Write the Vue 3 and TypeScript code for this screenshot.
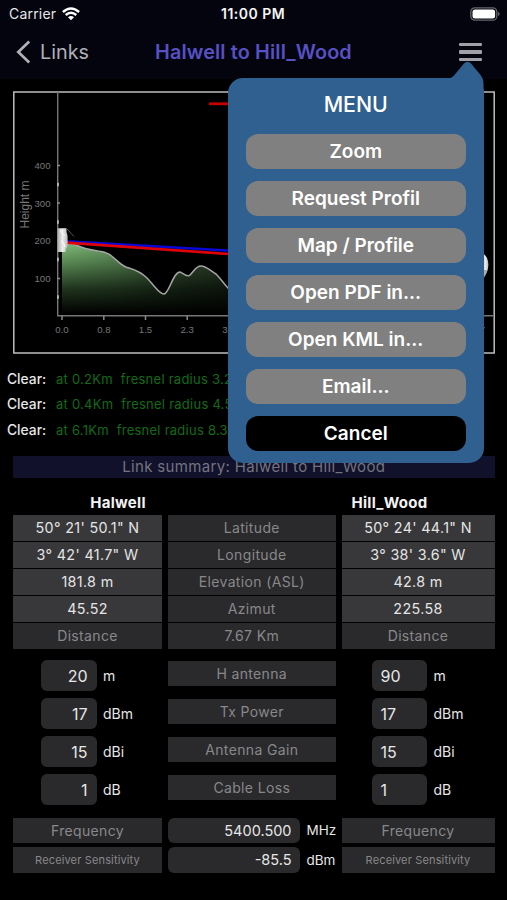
<script setup lang="ts">
interface ClearRow { at: string; radius: string }
interface SiteRow { left: string; label: string; right: string; dim?: boolean }
interface RadioRow { value: [string, string]; unit: string; label: string }

const actions: string[] = ['Zoom', 'Request Profil', 'Map / Profile', 'Open PDF in...', 'Open KML in...', 'Email...']

const clearances: ClearRow[] = [
  { at: 'at 0.2Km', radius: 'fresnel radius 3.2m' },
  { at: 'at 0.4Km', radius: 'fresnel radius 4.5m' },
  { at: 'at 6.1Km', radius: 'fresnel radius 8.3m' },
]

const siteRows: SiteRow[] = [
  { left: '50° 21\' 50.1" N', label: 'Latitude', right: '50° 24\' 44.1" N' },
  { left: '3° 42\' 41.7" W', label: 'Longitude', right: '3° 38\' 3.6" W' },
  { left: '181.8 m', label: 'Elevation (ASL)', right: '42.8 m' },
  { left: '45.52', label: 'Azimut', right: '225.58' },
  { left: 'Distance', label: '7.67 Km', right: 'Distance', dim: true },
]

const radioRows: RadioRow[] = [
  { value: ['20', '90'], unit: 'm', label: 'H antenna' },
  { value: ['17', '17'], unit: 'dBm', label: 'Tx Power' },
  { value: ['15', '15'], unit: 'dBi', label: 'Antenna Gain' },
  { value: ['1', '1'], unit: 'dB', label: 'Cable Loss' },
]

const yTicks = [
  { y: 165.5, text: '400' },
  { y: 203, text: '300' },
  { y: 240.5, text: '200' },
  { y: 278.5, text: '100' },
]
const minorTicks: number[] = [184.5, 222, 259.5, 297]
const xTicks = [
  { x: 62, text: '0.0' },
  { x: 103.8, text: '0.8' },
  { x: 145.5, text: '1.5' },
  { x: 187.2, text: '2.3' },
  { x: 229, text: '3.1' },
]
const terrain =
  'M62 247 C66 244 71 243 76 245 C84 249 91 250 98 251 C113 252 116 263 126 267 C132 269 139 270 147 278 C154 285 159 294 164 294 C169 294 173 272 180 272 C183 273 187 278 190 275 C194 271 196 266 201 266 C206 266 211 271 216 274 C221 279 224 284 228 288 C238 299 244 300 252 300'
</script>

<template>
  <div class="screen">
    <header class="top">
      <div class="status">
        <span class="carrier">Carrier</span>
        <svg class="wifi" viewBox="0 0 18 14" width="18" height="14">
          <path d="M0.9 5 Q9 -2 17.1 5" />
          <path d="M3.7 8 Q9 3.4 14.3 8" />
          <path class="dot" d="M9 13.2 L6 10.3 Q9 7.7 12 10.3 Z" />
        </svg>
        <span class="clock">11:00 PM</span>
        <svg class="battery" viewBox="0 0 31 14" width="31" height="14">
          <rect class="case" x="0.8" y="0.8" width="26" height="12.4" rx="4" />
          <rect class="charge" x="2.5" y="2.5" width="22.6" height="9" rx="2.5" />
          <path class="cap" d="M28.2 4.8 Q31 7 28.2 9.2 Z" />
        </svg>
      </div>
      <nav class="nav">
        <svg class="chevron" viewBox="0 0 15 24" width="15" height="24"><path d="M13.2 1.5 L2.3 12 L13.2 22.5" /></svg>
        <span class="back">Links</span>
        <h1>Halwell to Hill_Wood</h1>
        <span class="burger"><i></i><i></i><i></i></span>
      </nav>
    </header>

    <svg class="chart" viewBox="13 91 482 263" width="482" height="263">
      <defs>
        <linearGradient id="ground" gradientUnits="userSpaceOnUse" x1="0" y1="243" x2="0" y2="314">
          <stop offset="0" stop-color="#7fbd79" />
          <stop offset="0.25" stop-color="#5c8c57" />
          <stop offset="0.65" stop-color="#1f341d" />
          <stop offset="1" stop-color="#000" />
        </linearGradient>
        <linearGradient id="shade" gradientUnits="userSpaceOnUse" x1="62" y1="0" x2="240" y2="0">
          <stop offset="0" stop-color="#000" stop-opacity="0" />
          <stop offset="0.3" stop-color="#000" stop-opacity="0.15" />
          <stop offset="0.7" stop-color="#000" stop-opacity="0.5" />
          <stop offset="1" stop-color="#000" stop-opacity="0.65" />
        </linearGradient>
        <linearGradient id="dish" x1="0" y1="0" x2="1" y2="0">
          <stop offset="0" stop-color="#aaa" />
          <stop offset="0.5" stop-color="#eee" />
          <stop offset="1" stop-color="#bbb" />
        </linearGradient>
      </defs>
      <rect class="frame" x="13.8" y="92" width="480.4" height="261" />
      <path :d="terrain + ' V315 H62 Z'" fill="url(#ground)" />
      <path :d="terrain + ' V315 H62 Z'" fill="url(#shade)" />
      <path class="ridge" :d="terrain" />
      <path class="axis" d="M57.7 92 V315.7 M57 315.7 H493" />
      <g class="ticks">
        <g v-for="t in yTicks" :key="t.text">
          <path :d="`M57 ${t.y} h3`" />
          <text x="50.5" :y="t.y + 3.6" text-anchor="end">{{ t.text }}</text>
        </g>
        <g v-for="t in xTicks" :key="t.text">
          <path :d="`M${t.x} 316 v4`" />
          <text :x="t.x" y="332.7" text-anchor="middle">{{ t.text }}</text>
        </g>
        <path v-for="y in minorTicks" :key="y" class="minor" :d="`M58 ${y - 1.8} v3.6`" />
        <text x="482.5" y="332.7" text-anchor="middle">7</text>
      </g>
      <text class="title" transform="translate(29.3 228.5) rotate(-90)">Height m</text>
      <path class="sight" d="M66 241.2 L240 251.3" stroke="#0808d8" />
      <path class="sight" d="M66 242.6 L240 254.8" stroke="#e00008" />
      <path d="M209 103.8 H232" stroke="#c40000" stroke-width="2.8" />
      <path d="M67 229 L74 236.5" stroke="#555" />
      <path d="M57.5 228.3 H66.5 Q66 232 67.6 236 V246 Q65 249 65.5 252 H57.5 Z" fill="url(#dish)" />
      <path d="M60 229.5 q2 5 5 6 M61 241 q3 1 4 6" stroke="#fff" fill="none" />
      <path d="M482 253 Q488.4 256 488.4 265 Q488 273 483 278 Z" fill="url(#dish)" />
      <path d="M483 270 H487.5 L483 280 Z" fill="#aaa" />
    </svg>

    <ul class="clear">
      <li v-for="c in clearances" :key="c.at"><b>Clear:</b><span>{{ c.at }}&nbsp; {{ c.radius }}</span></li>
    </ul>

    <div class="summary">Link summary: Halwell to Hill_Wood</div>

    <div class="names"><span>Halwell</span><span>Hill_Wood</span></div>

    <div class="sites">
      <template v-for="r in siteRows" :key="r.label">
        <div :class="['cell', { dim: r.dim }]">{{ r.left }}</div>
        <div class="cell dim">{{ r.label }}</div>
        <div :class="['cell', { dim: r.dim }]">{{ r.right }}</div>
      </template>
    </div>

    <div class="radio">
      <template v-for="r in radioRows" :key="r.label">
        <div class="entry first"><span class="field end">{{ r.value[0] }}</span><span>{{ r.unit }}</span></div>
        <div class="cell dim tag">{{ r.label }}</div>
        <div class="entry second"><span class="field">{{ r.value[1] }}</span><span>{{ r.unit }}</span></div>
      </template>
    </div>

    <div class="rates">
      <div class="cell dim">Frequency</div>
      <div class="rate"><span class="wide">5400.500</span><span>MHz</span></div>
      <div class="cell dim">Frequency</div>
      <div class="cell dim small">Receiver Sensitivity</div>
      <div class="rate"><span class="wide">-85.5</span><span>dBm</span></div>
      <div class="cell dim small">Receiver Sensitivity</div>
    </div>

    <div class="menu">
      <svg class="arrow" viewBox="0 0 37 32" width="37" height="32">
        <path d="M0 17.5 Q4.5 17.5 7 14.5 L17 2.5 Q20.5 -1.2 24 2.5 L33.5 14 Q36.5 17.5 36.5 23 V32 H0 Z" />
      </svg>
      <h2>MENU</h2>
      <button v-for="a in actions" :key="a" type="button">{{ a }}</button>
      <button type="button" class="cancel">Cancel</button>
    </div>
  </div>
</template>

<style>
body {
  background: #000;
}
</style>

<style scoped>
.screen {
  position: relative;
  box-sizing: border-box;
  width: 507px;
  height: 900px;
  overflow: hidden;
  background: #000;
  color: #e6e6e6;
  font-family: Inter, "Liberation Sans", sans-serif;
  font-size: 14px;
}
.top {
  height: 79px;
  margin-bottom: 12px;
  background: #04040f;
}
.status {
  display: grid;
  grid-template-columns: 52px 160px 1fr 31px;
  align-items: center;
  height: 27px;
  padding: 0 6px 0 9px;
}
.carrier {
  font-size: 14px;
  letter-spacing: 0.2px;
}
.wifi {
  margin-left: 1px;
}
.wifi path {
  fill: none;
  stroke: #fff;
  stroke-width: 2.5;
}
.wifi .dot {
  fill: #fff;
  stroke: none;
}
.clock {
  font-weight: 600;
  letter-spacing: 0.5px;
  color: #f4f4f4;
}
.case {
  fill: none;
  stroke: #66666c;
  stroke-width: 1.3;
}
.charge {
  fill: #fff;
}
.cap {
  fill: #77777c;
}
.nav {
  display: flex;
  align-items: center;
  height: 50px;
  padding-left: 16px;
}
.chevron path {
  fill: none;
  stroke: #b0b0b8;
  stroke-width: 2.7;
}
.back {
  width: 106px;
  margin-left: 9px;
  font-size: 19.8px;
  color: #b0b0b8;
}
h1 {
  width: 290px;
  margin: 0 0 0 9px;
  font-size: 19.8px;
  font-weight: 600;
  letter-spacing: 0.15px;
  color: #5751c4;
  white-space: nowrap;
}
.burger {
  display: grid;
  gap: 4px;
  margin-left: 14px;
}
.burger i {
  width: 22.5px;
  height: 3.5px;
  border-radius: 1px;
  background: #a0a0a8;
}
.chart {
  display: block;
  margin-left: 13px;
}
.frame {
  fill: none;
  stroke: #bdbdbd;
  stroke-width: 1.5;
}
.ridge {
  fill: none;
  stroke: #a4a4a4;
  stroke-width: 1.5;
}
.axis {
  fill: none;
  stroke: #777;
  stroke-width: 1.4;
}
.ticks path {
  stroke: #8a8a8a;
  stroke-width: 1.5;
}
.ticks .minor {
  stroke: #ccc;
}
.ticks text {
  fill: #777;
  font: 9.6px "Liberation Sans", sans-serif;
}
.title {
  fill: #777;
  font: 12px "Liberation Sans", sans-serif;
}
.sight {
  stroke-width: 2.6;
}
.clear {
  display: grid;
  grid-auto-rows: 25.5px;
  margin: 12px 0 13.5px;
  padding: 0 0 0 7px;
  list-style: none;
}
.clear li {
  display: flex;
  align-items: center;
  font-size: 13px;
  white-space: nowrap;
}
.clear b {
  width: 49px;
  font-size: 13.8px;
  font-weight: 500;
}
.clear span {
  color: #126b17;
  letter-spacing: 0.25px;
}
.summary {
  height: 22px;
  width: 481.5px;
  margin-left: 13px;
  line-height: 22px;
  text-align: center;
  font-size: 15px;
  letter-spacing: 0.35px;
  color: #74747f;
  background: #11112c;
}
.names {
  display: grid;
  grid-template-columns: 210px 95px;
  justify-content: start;
  gap: 119px;
  height: 37px;
  line-height: 49px;
  padding-left: 13px;
  font-size: 15px;
  font-weight: 700;
  letter-spacing: 0.3px;
  text-align: center;
  color: #f2f2f2;
}
.sites,
.radio,
.rates {
  display: grid;
  grid-template-columns: 149px 167.5px 153px;
  column-gap: 6px;
  margin-left: 13px;
}
.sites {
  grid-auto-rows: 25.6px;
  row-gap: 1.4px;
}
.cell {
  display: flex;
  align-items: center;
  justify-content: center;
  background: #38383a;
  font-size: 14.3px;
  letter-spacing: 0.35px;
  color: #e4e4e4;
}
.dim {
  background: #2a2a2c;
  font-size: 14px;
  color: #88888a;
}
.radio {
  grid-auto-rows: 38px;
  margin-top: 11px;
}
.radio .tag {
  height: 25.5px;
  margin-top: 1px;
}
.entry {
  display: flex;
  gap: 6.5px;
  align-items: center;
  height: 31px;
}
.first {
  padding-left: 28px;
}
.second {
  padding-left: 30px;
}
.field {
  box-sizing: border-box;
  width: 55.5px;
  height: 31px;
  padding: 0 9px;
  border-radius: 6px;
  line-height: 32px;
  font-size: 16px;
  background: #2a2a2c;
}
.end {
  text-align: right;
}
.rates {
  grid-auto-rows: 25.8px;
  row-gap: 3.6px;
  margin-top: 6px;
}
.rate {
  display: flex;
  align-items: center;
  gap: 6.5px;
  font-size: 13.5px;
}
.wide {
  box-sizing: border-box;
  width: 132px;
  flex: none;
  height: 100%;
  padding-right: 8.5px;
  border-radius: 6px;
  line-height: 26px;
  text-align: right;
  font-size: 14.5px;
  background: #2a2a2c;
}
.small {
  font-size: 11px;
  letter-spacing: 0.15px;
}
.menu {
  position: absolute;
  left: 227.5px;
  top: 78px;
  box-sizing: border-box;
  display: flex;
  flex-direction: column;
  gap: 12.5px;
  width: 256.5px;
  height: 385px;
  padding: 0 18px;
  border-radius: 15px;
  background: #30608f;
}
.arrow {
  position: absolute;
  top: -17px;
  right: 0;
}
.arrow path {
  fill: #30608f;
}
h2 {
  height: 43.5px;
  margin: 0;
  line-height: 53px;
  text-align: center;
  font-size: 21.3px;
  font-weight: 500;
  color: #fff;
}
button {
  flex: none;
  height: 34.5px;
  padding: 0;
  border: 0;
  border-radius: 12px;
  font: 600 19px Inter, "Liberation Sans", sans-serif;
  color: #fff;
  background: #808080;
}
.cancel {
  background: #000;
}
</style>
